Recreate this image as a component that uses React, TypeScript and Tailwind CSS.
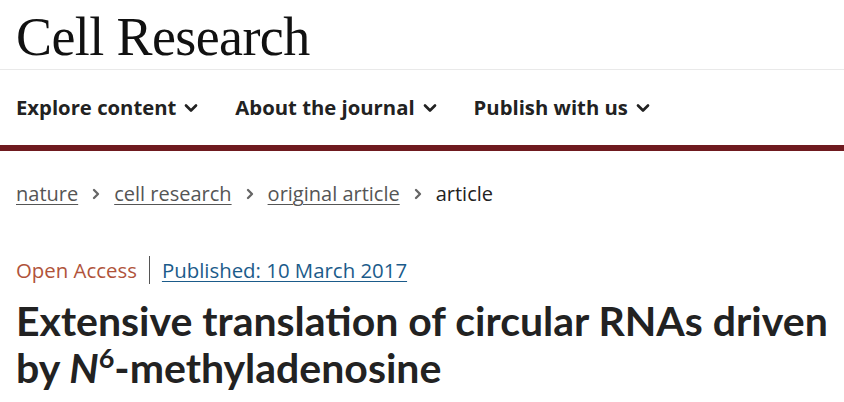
import { ChevronDown, ChevronRight } from "lucide-react";

const navItems = ["Explore content", "About the journal", "Publish with us"];

const crumbs = ["nature", "cell research", "original article"];

function App() {
    return (
        <div className="w-[844px] h-[402px] overflow-hidden bg-white font-['Open_Sans',sans-serif]">
            <header>
                <div className="h-[70px] px-4 flex items-center border-b border-[#e9e9e9]">
                    <span className="font-['Liberation_Serif',serif] text-[54px] leading-none tracking-[-0.6px] text-[#111] pt-1">
                        Cell Research
                    </span>
                </div>
                <nav className="h-[75px] px-4 flex items-center gap-[34px]">
                    {navItems.map((item) => (
                        <button
                            key={item}
                            className="flex items-center gap-[5px] text-[20.3px] font-bold text-[#222]"
                        >
                            {item}
                            <ChevronDown size={20} strokeWidth={3.2} />
                        </button>
                    ))}
                </nav>
                <div className="h-[6px] bg-[#6f1a1f]" />
            </header>

            <main className="px-4">
                <ol className="flex items-center gap-[10px] mt-[28px] text-[20px] text-[#555]">
                    {crumbs.map((c) => (
                        <li key={c} className="flex items-center gap-[10px]">
                            <a href="#" className="underline underline-offset-[3px] decoration-1">
                                {c}
                            </a>
                            <ChevronRight size={16} strokeWidth={3.5} className="text-[#666]" />
                        </li>
                    ))}
                    <li className="text-[#222]">article</li>
                </ol>

                <div className="flex items-center mt-[46px] text-[20.4px]">
                    <span className="text-[#b0533a] pr-3 border-r border-[#555] leading-[28px]">
                        Open Access
                    </span>
                    <a href="#" className="pl-3 text-[#1b5b8a] underline underline-offset-[3px] decoration-1">
                        Published: 10 March 2017
                    </a>
                </div>

                <h1 className="mt-[11px] font-['Lato',sans-serif] font-bold text-[41px] leading-[47px] text-[#222]">
                    Extensive translation of circular RNAs driven by{" "}
                    <i>N</i>
                    <sup className="text-[27px] leading-[0] top-[-0.55em]">6</sup>-methyladenosine
                </h1>
            </main>
        </div>
    );
}

export default App;
